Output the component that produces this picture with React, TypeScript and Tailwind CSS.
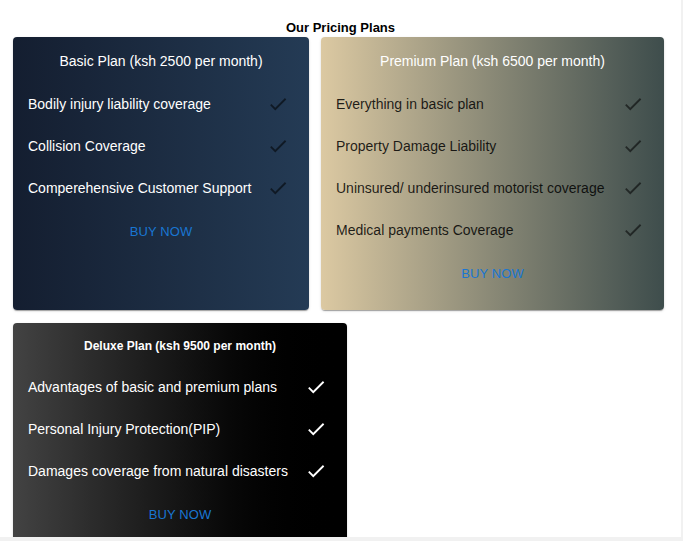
import React from "react";

type Plan = {
  title: string;
  features: string[];
  width: string;
  bg: string;
  text: string;
  check: string;
  titleClass: string;
};

const plans: Plan[] = [
  {
    title: "Basic Plan (ksh 2500 per month)",
    features: [
      "Bodily injury liability coverage",
      "Collision Coverage",
      "Comperehensive Customer Support",
    ],
    width: "w-[296px]",
    bg: "bg-gradient-to-r from-[#141e30] to-[#243b55]",
    text: "text-white",
    check: "text-black/55",
    titleClass: "text-[14px] leading-4 h-4 mb-[14px] text-white",
  },
  {
    title: "Premium Plan (ksh 6500 per month)",
    features: [
      "Everything in basic plan",
      "Property Damage Liability",
      "Uninsured/ underinsured motorist coverage",
      "Medical payments Coverage",
    ],
    width: "w-[343px]",
    bg: "bg-gradient-to-r from-[#dcc9a2] to-[#3e4d4c]",
    text: "text-black/85",
    check: "text-black/55",
    titleClass: "text-[14px] leading-4 h-4 mb-[14px] text-white",
  },
  {
    title: "Deluxe Plan (ksh 9500 per month)",
    features: [
      "Advantages of basic and premium plans",
      "Personal Injury Protection(PIP)",
      "Damages coverage from natural disasters",
    ],
    width: "w-[334px]",
    bg: "bg-gradient-to-r from-[#434343] to-[#000000]",
    text: "text-white",
    check: "text-white",
    titleClass: "text-[12px] font-bold leading-[14px] h-[14px] mb-[13px] text-white",
  },
];

function CheckIcon({ className }: { className: string }) {
  return (
    <svg viewBox="0 0 24 24" className={`w-[22px] h-[22px] ${className}`} fill="currentColor">
      <path d="M9 16.17 4.83 12l-1.42 1.41L9 19 21 7l-1.41-1.41z" />
    </svg>
  );
}

function PlanCard({ plan }: { plan: Plan }) {
  return (
    <div
      className={`${plan.width} ${plan.bg} rounded-[4px] pt-4 pb-[18px] shadow-[0_2px_1px_-1px_rgba(0,0,0,0.2),0_1px_1px_0_rgba(0,0,0,0.14),0_1px_3px_0_rgba(0,0,0,0.12)]`}
    >
      <div className={`text-center ${plan.titleClass}`}>{plan.title}</div>
      <ul>
        {plan.features.map((f) => (
          <li key={f} className="flex items-center h-[42px] pl-[15px] pr-[20px]">
            <span className={`flex-1 text-[14px] leading-4 whitespace-nowrap ${plan.text}`}>{f}</span>
            <CheckIcon className={plan.check} />
          </li>
        ))}
      </ul>
      <div className="flex justify-center mt-[5px]">
        <button className="h-9 px-2 text-[13px] tracking-[0.1px] uppercase text-[#1976d2]">
          Buy now
        </button>
      </div>
    </div>
  );
}

export default function App() {
  return (
    <div className="w-[683px] h-[541px] bg-[#f1f1f1] font-['Liberation_Sans',Arial,sans-serif]">
      <div className="w-[681px] h-[537px] bg-white overflow-hidden pt-[20px]">
        <h1 className="text-center text-[13px] font-bold leading-4 mb-[1px] text-black">
          Our Pricing Plans
        </h1>
        <div className="flex flex-wrap gap-x-[12px] gap-y-[13px] px-[13px]">
          {plans.map((p) => (
            <PlanCard key={p.title} plan={p} />
          ))}
        </div>
      </div>
    </div>
  );
}
